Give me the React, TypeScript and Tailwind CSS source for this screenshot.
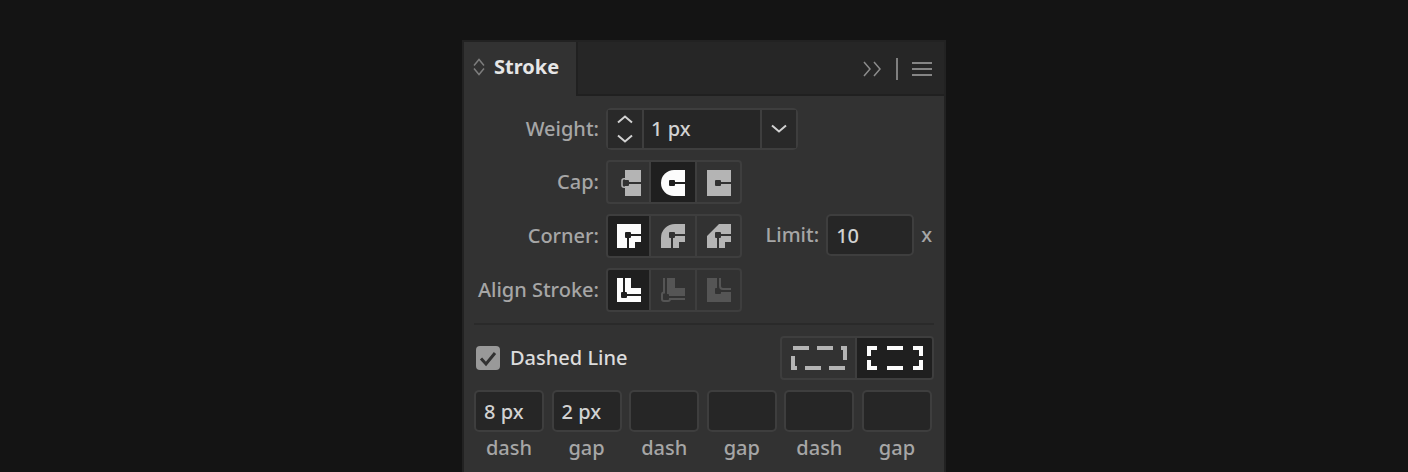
import { useState } from 'react';
import type { ReactNode } from 'react';

const capIcons = [
  {
    name: 'Butt Cap',
    icon: (
      <>
        <path d="M8 0h16v12H12v-1a1 1 0 0 0-1-1H8zM8 16h3a1 1 0 0 0 1-1v-1h12v12H8z" />
        <path d="M8 8.75H7a2 2 0 0 0-2 2v4.5a2 2 0 0 0 2 2h1" fill="none" stroke="currentColor" strokeWidth="1.5" />
      </>
    ),
  },
  {
    name: 'Round Cap',
    icon: (
      <path d="M24 0H13a13 13 0 0 0 0 26h11V14H14v1a1 1 0 0 1-1 1H9a1 1 0 0 1-1-1v-4a1 1 0 0 1 1-1h4a1 1 0 0 1 1 1v1h10z" />
    ),
  },
  {
    name: 'Projecting Cap',
    icon: (
      <path d="M24 0H0v26h24V14H14v1a1 1 0 0 1-1 1H9a1 1 0 0 1-1-1v-4a1 1 0 0 1 1-1h4a1 1 0 0 1 1 1v1h10z" />
    ),
  },
];

const cornerIcons = [
  {
    name: 'Miter Join',
    icon: <path d="M0 0h24v10H14V9a1 1 0 0 0-1-1H9a1 1 0 0 0-1 1v4a1 1 0 0 0 1 1h1v10H0zM12 14h1a1 1 0 0 0 1-1v-1h10v6h-6v6h-6z" />,
  },
  {
    name: 'Round Join',
    icon: <path d="M0 14A14 14 0 0 1 14 0h10v10H14V9a1 1 0 0 0-1-1H9a1 1 0 0 0-1 1v4a1 1 0 0 0 1 1h1v10H0zM12 14h1a1 1 0 0 0 1-1v-1h10v6h-6v6h-6z" />,
  },
  {
    name: 'Bevel Join',
    icon: <path d="M0 12 12 0h12v10H14V9a1 1 0 0 0-1-1H9a1 1 0 0 0-1 1v4a1 1 0 0 0 1 1h1v10H0zM12 14h1a1 1 0 0 0 1-1v-1h10v6h-6v6h-6z" />,
  },
];

const alignIcons = [
  {
    name: 'Align Stroke to Center',
    icon: <path d="M0 0h6v14H5a1 1 0 0 0-1 1v4a1 1 0 0 0 1 1h4a1 1 0 0 0 1-1v-1h14v6H0zM8 0h6v10h10v6H10v-1a1 1 0 0 0-1-1H8z" />,
  },
  {
    name: 'Align Stroke to Inside',
    disabled: true,
    icon: (
      <>
        <path d="M6 0h8v10h10v8H8v-1a1 1 0 0 0-1-1H6z" />
        <path d="M3 0v14.5a2 2 0 0 0-2 2V21a2 2 0 0 0 2 2h4a2 2 0 0 0 2-2h15" fill="none" stroke="currentColor" strokeWidth="2" />
      </>
    ),
  },
  {
    name: 'Align Stroke to Outside',
    disabled: true,
    icon: (
      <>
        <path d="M0 0h10v10H9a1 1 0 0 0-1 1v4a1 1 0 0 0 1 1h4a1 1 0 0 0 1-1v-1h10v10H0z" />
        <path d="M13 0v8a3 3 0 0 0 3 3h8" fill="none" stroke="currentColor" strokeWidth="2" />
      </>
    ),
  },
];

const dashIcons = [
  {
    name: 'Preserves exact dash and gap lengths',
    icon: <path d="M2 0h16v4H2zM26 0h16v4H26zM50 0h6v14h-4V4h-2zM0 10h4v10h2v4H0zM14 20h16v4H14zM38 20h16v4H38z" />,
  },
  {
    name: 'Aligns dashes to corners and path ends',
    icon: (
      <path d="M0 0h10v4H4v6H0zM20 0h16v4H20zM46 0h10v10h-4V4h-6zM0 14h4v6h6v4H0zM20 20h16v4H20zM46 20h6v-6h4v10H46z" />
    ),
  },
];

const dashFields = [
  { label: 'dash', value: '8 px' },
  { label: 'gap', value: '2 px' },
  { label: 'dash', value: '' },
  { label: 'gap', value: '' },
  { label: 'dash', value: '' },
  { label: 'gap', value: '' },
];

type Option = { name: string; icon: ReactNode; disabled?: boolean };

type ToggleGroupProps = {
  label: string;
  options: Option[];
  initial: number;
  viewBox: string;
  columns: string;
  iconSize: string;
};

const threeColumns = 'w-[136px] grid-cols-[43px_46px_43px]';

function ToggleGroup({ label, options, initial, viewBox, columns, iconSize }: ToggleGroupProps) {
  const [selected, setSelected] = useState(initial);

  return (
    <div
      role="group"
      aria-label={label}
      className={`grid h-11 shrink-0 overflow-hidden rounded-[4px] border-2 border-[#3e3e3e] divide-x-2 divide-[#3e3e3e] ${columns}`}
    >
      {options.map((option, i) => (
        <button
          key={option.name}
          type="button"
          aria-label={option.name}
          aria-pressed={selected === i}
          disabled={option.disabled}
          onClick={() => setSelected(i)}
          className={`flex items-center justify-center ${
            selected === i ? 'bg-[#1f1f1f] text-[#fcfcfc]' : option.disabled ? 'text-[#555555]' : 'text-[#b4b4b4]'
          }`}
        >
          <svg viewBox={viewBox} className={iconSize} fill="currentColor">
            {option.icon}
          </svg>
        </button>
      ))}
    </div>
  );
}

function Row({ label, htmlFor, children }: { label: string; htmlFor?: string; children: ReactNode }) {
  return (
    <div className="flex items-center gap-[7px]">
      <label htmlFor={htmlFor} className="w-[125px] shrink-0 whitespace-nowrap text-right">
        {label}
      </label>
      {children}
    </div>
  );
}

export default function App() {
  const [weight, setWeight] = useState(1);
  const [limit, setLimit] = useState('10');
  const [dashed, setDashed] = useState(true);
  const [dashes, setDashes] = useState(dashFields.map((f) => f.value));

  return (
    <main className="flex min-h-screen justify-center bg-[#141414] pt-10 font-['Noto_Sans',sans-serif] text-xl leading-6 font-medium text-[#a6a6a6]">
      <section className="flex w-full max-w-[484px] flex-col border-2 border-b-0 border-[#222222] bg-[#323232]">
        {/* Tab bar */}
        <header className="flex h-[54px] bg-[#262626]">
          <h2 className="flex items-center border-r-2 border-[#202020] bg-[#323232] pl-[9px] pr-[17px] pb-1">
            <button type="button" className="flex items-center gap-[9px] font-bold text-[#e6e6e6]">
              <svg viewBox="0 0 12 18" className="h-[18px] w-3 text-[#7d7d7d]" fill="none" stroke="currentColor" strokeWidth="1.5">
                <path d="M1 7.5 6 1.5l5 6M1 10.5l5 6 5-6" />
              </svg>
              Stroke
            </button>
          </h2>
          <div className="flex flex-1 items-center justify-end gap-3.5 border-b-2 border-[#202020] pr-3 pt-0.5">
            <button type="button" aria-label="Collapse panel" className="text-[#8c8c8c]">
              <svg viewBox="0 0 20 16" className="h-4 w-5" fill="none" stroke="currentColor" strokeWidth="1.5">
                <path d="m2 1 6 7-6 7M12 1l6 7-6 7" />
              </svg>
            </button>
            <span className="h-[22px] w-0.5 bg-[#7f7f7f]" />
            <button type="button" aria-label="Panel menu" className="text-[#858585]">
              <svg viewBox="0 0 20 14" className="h-3.5 w-5" fill="currentColor">
                <path d="M0 0h20v2H0zM0 6h20v2H0zM0 12h20v2H0z" />
              </svg>
            </button>
          </div>
        </header>

        <div className="flex flex-col gap-2.5 px-2.5 pt-3">
          <Row label="Weight:" htmlFor="weight">
            <div className="flex h-[42px] w-48 rounded-[5px] border-2 border-[#3e3e3e] bg-[#262626] text-[#d2d2d2] divide-x-2 divide-[#3e3e3e]">
              <div className="flex w-9 shrink-0 flex-col justify-between bg-[#292929] py-1">
                <button type="button" aria-label="Increase weight" onClick={() => setWeight(weight + 1)} className="flex justify-center">
                  <svg viewBox="0 0 16 10" className="h-2.5 w-4" fill="none" stroke="currentColor" strokeWidth="2">
                    <path d="m1 8.5 7-6 7 6" />
                  </svg>
                </button>
                <button
                  type="button"
                  aria-label="Decrease weight"
                  onClick={() => setWeight(Math.max(0, weight - 1))}
                  className="flex justify-center"
                >
                  <svg viewBox="0 0 16 10" className="h-2.5 w-4" fill="none" stroke="currentColor" strokeWidth="2">
                    <path d="m1 1.5 7 6 7-6" />
                  </svg>
                </button>
              </div>
              <input
                id="weight"
                value={`${weight} px`}
                onChange={(e) => setWeight(parseInt(e.target.value, 10) || 0)}
                className="min-w-0 flex-1 px-[7px] outline-none"
              />
              <button type="button" aria-label="Weight presets" aria-haspopup="listbox" className="flex w-[34px] shrink-0 items-center justify-center bg-[#292929]">
                <svg viewBox="0 0 16 10" className="h-2.5 w-4" fill="none" stroke="currentColor" strokeWidth="2">
                  <path d="m1 1.5 7 6 7-6" />
                </svg>
              </button>
            </div>
          </Row>

          <Row label="Cap:">
            <ToggleGroup label="Cap" options={capIcons} initial={1} viewBox="0 -2 24 28" columns={threeColumns} iconSize="h-7 w-6" />
          </Row>

          <Row label="Corner:">
            <ToggleGroup label="Corner" options={cornerIcons} initial={0} viewBox="0 0 24 24" columns={threeColumns} iconSize="size-6" />
            <div className="ml-auto flex items-center gap-[7px] self-start pr-0.5">
              <label htmlFor="limit">Limit:</label>
              <input
                id="limit"
                value={limit}
                onChange={(e) => setLimit(e.target.value)}
                className="h-[42px] w-[88px] rounded-[5px] border-2 border-[#3e3e3e] bg-[#262626] px-2 text-[#d2d2d2] outline-none"
              />
              <span>x</span>
            </div>
          </Row>

          <Row label="Align Stroke:">
            <ToggleGroup label="Align Stroke" options={alignIcons} initial={0} viewBox="0 0 24 24" columns={threeColumns} iconSize="size-6" />
          </Row>

          <hr className="mt-px mb-px border-t-2 border-[#2a2a2a]" />

          <div className="flex items-center justify-between">
            <label className="flex items-center gap-2.5 pl-0.5 text-[#dcdcdc]">
              <span className="grid size-6">
                <input
                  type="checkbox"
                  checked={dashed}
                  onChange={(e) => setDashed(e.target.checked)}
                  className="peer col-start-1 row-start-1 size-6 appearance-none rounded-[4px] bg-[#999999]"
                />
                <svg
                  viewBox="0 0 24 24"
                  className="pointer-events-none col-start-1 row-start-1 hidden size-6 text-[#323232] peer-checked:block"
                  fill="none"
                  stroke="currentColor"
                  strokeWidth="3"
                >
                  <path d="m5 12.5 5 5.5L19 7" />
                </svg>
              </span>
              Dashed Line
            </label>
            <ToggleGroup
              label="Dash alignment"
              options={dashIcons}
              initial={1}
              viewBox="0 0 56 24"
              columns="w-[154px] grid-cols-2"
              iconSize="h-6 w-14"
            />
          </div>

          {/* Dash pattern */}
          <div className="flex justify-between pr-0.5">
            {dashFields.map((field, i) => (
              <div key={i} className="flex w-[70px] flex-col gap-1">
                <input
                  id={`pattern-${i}`}
                  value={dashes[i]}
                  disabled={!dashed}
                  onChange={(e) => setDashes(dashes.map((d, n) => (n === i ? e.target.value : d)))}
                  className="h-[42px] w-full rounded-[5px] border-2 border-[#3e3e3e] bg-[#262626] px-2 text-[#d2d2d2] outline-none"
                />
                <label htmlFor={`pattern-${i}`} className="text-center">
                  {field.label}
                </label>
              </div>
            ))}
          </div>
        </div>
      </section>
    </main>
  );
}
